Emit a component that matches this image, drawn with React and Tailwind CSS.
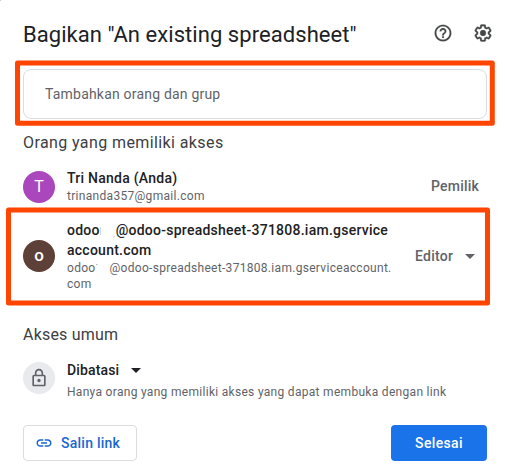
const HelpIcon = () => (
  <svg className="size-5 shrink-0" viewBox="0 0 24 24" fill="#444746" stroke="#444746" strokeWidth="0.2">
    <path d="M11 18h2v-2h-2v2zm1-16C6.48 2 2 6.48 2 12s4.48 10 10 10 10-4.48 10-10S17.52 2 12 2zm0 18c-4.41 0-8-3.59-8-8s3.59-8 8-8 8 3.59 8 8-3.59 8-8 8zm0-14c-2.21 0-4 1.79-4 4h2c0-1.1.9-2 2-2s2 .9 2 2c0 2-3 1.75-3 5h2c0-2.25 3-2.5 3-5 0-2.21-1.79-4-4-4z" />
  </svg>
);

const GearIcon = () => (
  <svg className="size-5 shrink-0" viewBox="0 0 24 24" fill="#444746" stroke="#444746" strokeWidth="0.3">
    <path d="M13.85 22.25h-3.7c-.74 0-1.36-.54-1.45-1.27l-.27-1.89c-.27-.14-.53-.29-.79-.46l-1.8.72c-.7.26-1.47-.03-1.81-.65L2.2 15.53c-.35-.66-.2-1.44.36-1.88l1.53-1.19c-.01-.15-.02-.3-.02-.46 0-.15.01-.31.02-.46l-1.52-1.19c-.59-.45-.74-1.26-.37-1.88l1.85-3.19c.34-.62 1.11-.9 1.79-.63l1.81.73c.26-.17.52-.32.78-.46l.27-1.91c.09-.7.71-1.25 1.44-1.25h3.7c.74 0 1.36.54 1.45 1.27l.27 1.89c.27.14.53.29.79.46l1.8-.72c.71-.26 1.48.03 1.82.65l1.84 3.18c.36.66.2 1.44-.36 1.88l-1.52 1.19c.01.15.02.3.02.46s-.01.31-.02.46l1.52 1.19c.56.45.72 1.23.37 1.86l-1.86 3.22c-.34.62-1.11.9-1.8.63l-1.8-.72c-.26.17-.52.32-.78.46l-.27 1.91c-.1.68-.72 1.22-1.46 1.22zm-3.23-2h2.76l.37-2.55.53-.22c.44-.18.88-.44 1.34-.78l.45-.34 2.38.96 1.38-2.4-2.03-1.58.07-.56c.03-.26.06-.51.06-.78s-.03-.53-.06-.78l-.07-.56 2.03-1.58-1.39-2.4-2.39.96-.45-.35c-.42-.32-.87-.58-1.33-.77l-.52-.22-.37-2.55h-2.76l-.37 2.55-.53.21c-.44.19-.88.44-1.34.79l-.45.33-2.38-.95-1.39 2.39 2.03 1.58-.07.56a7 7 0 0 0-.06.79c0 .26.02.53.06.78l.07.56-2.03 1.58 1.38 2.4 2.39-.96.45.35c.43.33.86.58 1.33.77l.53.22.38 2.55z" />
    <circle cx="12" cy="12" r="3.5" />
  </svg>
);

const LockIcon = () => (
  <svg className="size-5" viewBox="0 0 24 24" fill="#5f6368">
    <path d="M18 8h-1V6c0-2.76-2.24-5-5-5S7 3.24 7 6v2H6c-1.1 0-2 .9-2 2v10c0 1.1.9 2 2 2h12c1.1 0 2-.9 2-2V10c0-1.1-.9-2-2-2zM9 6c0-1.66 1.34-3 3-3s3 1.34 3 3v2H9V6zm9 14H6V10h12v10zm-6-3c1.1 0 2-.9 2-2s-.9-2-2-2-2 .9-2 2 .9 2 2 2z" />
  </svg>
);

const LinkIcon = () => (
  <svg className="size-[18px]" viewBox="0 0 24 24" fill="#1967d2">
    <path d="M3.9 12c0-1.71 1.39-3.1 3.1-3.1h4V7H7c-2.76 0-5 2.24-5 5s2.24 5 5 5h4v-1.900H7c-1.71 0-3.1-1.39-3.1-3.100zM8 13h8v-2H8v2zm9-6h-4v1.900h4c1.71 0 3.1 1.39 3.1 3.100s-1.39 3.100-3.1 3.100h-4V17h4c2.76 0 5-2.24 5-5s-2.24-5-5-5z" />
  </svg>
);

const Caret = ({ className }) => (
  <svg className={`h-[5px] w-[10px] shrink-0 ${className}`} viewBox="0 0 10 5">
    <path d="M0 0h10L5 5z" fill="currentColor" />
  </svg>
);

// Orange highlight frames and the faint marks left around the erased part of the address
const Annotations = () => (
  <svg className="pointer-events-none absolute inset-0" width="505" height="470" viewBox="0 0 505 470" fill="none">
    <g stroke="#ff4500" strokeWidth="5" strokeLinejoin="round">
      <rect x="17.5" y="63" width="474.8" height="60.2" />
      <rect x="8.5" y="210" width="479" height="93" />
    </g>
    <path d="M100.500 227v8M114.500 236l-1 2" stroke="#d5d6d8" strokeWidth="1" />
    <path d="M96 264.500h1.500M111 272.500h1" stroke="#b5b7ba" strokeWidth="1" />
    <path d="M0 0h1" stroke="#9a9a9a" strokeWidth="1" />
  </svg>
);

export default function App() {
  return (
    <main className="relative flex h-[470px] w-[505px] flex-col overflow-hidden bg-white pl-[23px] pr-[18px] font-['Roboto',sans-serif] text-[#202124]">
      <header className="flex h-[66px] items-center justify-between pr-1 whitespace-nowrap">
        <h1 className="pt-[3px] text-[22px] leading-7 tracking-[0.06px]">Bagikan "An existing spreadsheet"</h1>
        <div className="-mr-[10px] flex gap-5">
          <HelpIcon />
          <GearIcon />
        </div>
      </header>

      <div className="mt-[3px] flex h-[50px] w-[464px] shrink-0 items-center rounded-lg border border-[#dadce0] pl-[21px] text-sm tracking-[0.2px] text-[#5f6368]">
        Tambahkan orang dan grup
      </div>

      <h2 className="mt-3 text-base leading-6 tracking-[0.4px] text-[#3c4043]">Orang yang memiliki akses</h2>

      <section className="mt-[13px] flex h-9 shrink-0 items-center">
        <div className="mt-[2px] flex size-8 shrink-0 items-center justify-center rounded-full bg-[#ab47bc] text-base text-white">T</div>
        <div className="ml-3 flex-1 whitespace-nowrap">
          <p className="text-sm leading-5 font-medium tracking-[0.25px]">Tri Nanda (Anda)</p>
          <p className="text-xs leading-4 tracking-[0.3px] text-[#5f6368]">trinanda357@gmail.com</p>
        </div>
        <span className="mr-2 text-sm font-medium tracking-[0.2px] text-[#5f6368]">Pemilik</span>
      </section>

      <section className="mt-4 flex h-[72px] shrink-0 items-center">
        <div className="flex size-8 shrink-0 items-center justify-center rounded-full bg-[#5d4037] pb-px text-[17px] font-medium text-white">o</div>
        <div className="ml-3 w-[348px] whitespace-nowrap">
          <p className="text-sm leading-5 font-medium tracking-[0.25px]">
            odoo<span className="inline-block w-4" />@odoo-spreadsheet-371808.iam.gservice<br />account.com
          </p>
          <p className="text-xs leading-4 tracking-[0.3px] text-[#5f6368]">
            odoo<span className="inline-block w-[14px]" />@odoo-spreadsheet-371808.iam.gserviceaccount.<br />com
          </p>
        </div>
        <span className="text-sm font-medium tracking-[0.25px] text-[#5f6368]">Editor</span>
        <Caret className="ml-3 text-[#5f6368]" />
      </section>

      <h2 className="mt-[31px] text-base leading-6 tracking-[0.2px] text-[#3c4043]">Akses umum</h2>

      <section className="mt-[13px] flex h-[42px] shrink-0 items-start">
        <div className="mt-[2px] flex size-8 shrink-0 items-center justify-center rounded-full bg-[#e8eaed]">
          <LockIcon />
        </div>
        <div className="ml-3 whitespace-nowrap">
          <div className="flex items-center text-sm leading-5 font-medium tracking-[0.15px]">
            Dibatasi <Caret className="ml-3" />
          </div>
          <p className="mt-[2px] text-xs leading-5 tracking-[0.3px] text-[#5f6368]">Hanya orang yang memiliki akses yang dapat membuka dengan link</p>
        </div>
      </section>

      <footer className="mt-[23px] flex w-[464px] shrink-0 justify-between text-sm font-medium tracking-[0.25px]">
        <button className="flex h-9 w-[114px] items-center gap-2 rounded border border-[#dadce0] pl-[11px] whitespace-nowrap text-[#1967d2]">
          <LinkIcon />
          Salin link
        </button>
        <button className="h-9 w-24 rounded bg-[#1a73e8] tracking-[0.35px] text-white">Selesai</button>
      </footer>

      <Annotations />
    </main>
  );
}
